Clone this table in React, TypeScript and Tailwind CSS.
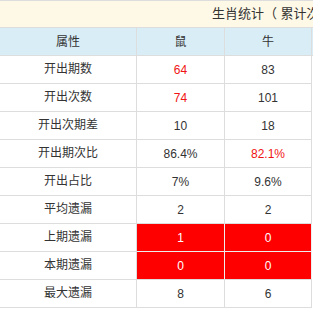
import React from "react";

type Cell = { v: string; red?: boolean; bg?: boolean };
const rows: { label: string; a: Cell; b: Cell }[] = [
  { label: "开出期数", a: { v: "64", red: true }, b: { v: "83" } },
  { label: "开出次数", a: { v: "74", red: true }, b: { v: "101" } },
  { label: "开出次期差", a: { v: "10" }, b: { v: "18" } },
  { label: "开出期次比", a: { v: "86.4%" }, b: { v: "82.1%", red: true } },
  { label: "开出占比", a: { v: "7%" }, b: { v: "9.6%" } },
  { label: "平均遗漏", a: { v: "2" }, b: { v: "2" } },
  { label: "上期遗漏", a: { v: "1", bg: true }, b: { v: "0", bg: true } },
  { label: "本期遗漏", a: { v: "0", bg: true }, b: { v: "0", bg: true } },
  { label: "最大遗漏", a: { v: "8" }, b: { v: "6" } },
];

function ValueCell({ c, w }: { c: Cell; w: string }) {
  const base = `${w} h-[27px] flex items-center justify-center border-r`;
  if (c.bg) {
    return <div className={`${base} bg-[#ff0000] text-white border-[#eeeeee]`}>{c.v}</div>;
  }
  return (
    <div className={`${base} border-[#dddddd] ${c.red ? "text-[#f01414]" : "text-[#333333]"}`}>{c.v}</div>
  );
}

export default function App() {
  return (
    <div
      className="w-[313px] h-[310px] overflow-hidden bg-white text-[12px] text-[#333333]"
      style={{ fontFamily: '"Liberation Sans", Arial, "Noto Sans CJK SC", sans-serif' }}
    >
      <div className="border-t border-[#dddddd]" />
      <div className="h-[27px] bg-[#fef8e6] border-b border-[#dddddd] flex items-center pl-[212px] whitespace-pre overflow-hidden text-[13px]">
        {"生肖统计（ 累计次数"}
      </div>
      <div className="flex h-[28px] bg-[#d9edf7] border-b border-[#dddddd]">
        <div className="w-[137px] h-[27px] flex items-center justify-center border-r border-[#dddddd]">属性</div>
        <div className="w-[88px] h-[27px] flex items-center justify-center border-r border-[#dddddd]">鼠</div>
        <div className="w-[87px] h-[27px] flex items-center justify-center border-r border-[#dddddd]">牛</div>
      </div>
      {rows.map((r, i) => {
        const redRow = r.a.bg;
        const nextRed = rows[i + 1]?.a.bg;
        return (
          <div key={r.label} className="flex h-[28px]">
            <div className="w-[137px] h-[28px] flex items-center justify-center border-r border-b border-[#dddddd]">
              <span className="pb-[1px]">{r.label}</span>
            </div>
            <div className="flex flex-col">
              <div className="flex">
                <ValueCell c={r.a} w="w-[88px]" />
                <ValueCell c={r.b} w="w-[87px]" />
              </div>
              <div className={`h-[1px] w-[175px] ${redRow && nextRed ? "bg-[#eeeeee]" : "bg-[#dddddd]"}`} />
            </div>
          </div>
        );
      })}
    </div>
  );
}
